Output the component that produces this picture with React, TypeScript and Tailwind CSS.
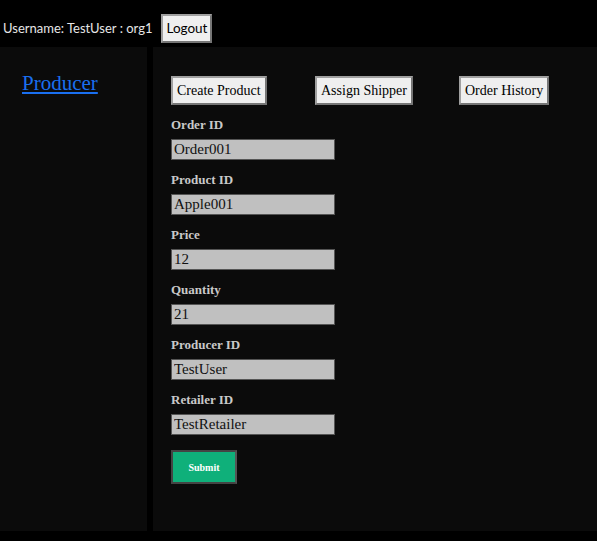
const fields = [
  { label: "Order ID", value: "Order001" },
  { label: "Product ID", value: "Apple001" },
  { label: "Price", value: "12" },
  { label: "Quantity", value: "21" },
  { label: "Producer ID", value: "TestUser" },
  { label: "Retailer ID", value: "TestRetailer" },
];

const tabs = ["Create Product", "Assign Shipper", "Order History"];

export default function App() {
  return (
    <div className="w-[597px] h-[541px] bg-black flex flex-col font-['Liberation_Serif',serif]">
      <header className="h-[47px] shrink-0 flex items-center gap-[9px] pl-[3px] pt-[10px] font-['Lato',sans-serif] text-[13px] text-[#e6e6e6]">
        <span>Username: TestUser : org1</span>
        <button className="h-[29px] px-[3px] bg-[#efefef] text-black text-[13.5px] border-2 border-[#767676] border-t-[#a0a0a0] border-l-[#a0a0a0]">
          Logout
        </button>
      </header>
      <div className="flex gap-[6px] h-[484px]">
        <aside className="w-[147px] shrink-0 bg-[#0b0b0b] pt-[21px] pl-[22px]">
          <a href="#" className="text-[21px] text-[#1a6ff0] underline">
            Producer
          </a>
        </aside>
        <main className="flex-1 bg-[#0b0b0b] pl-[18px] pt-[29px]">
          <div className="flex">
            {tabs.map((t) => (
              <div key={t} className="w-[144px]">
                <button className="h-[29px] px-[4px] bg-[#efefef] text-black text-[14px] border-2 border-[#767676] border-t-[#a0a0a0] border-l-[#a0a0a0]">
                  {t}
                </button>
              </div>
            ))}
          </div>
          <form className="flex flex-col mt-[7px]">
            {fields.map((f) => (
              <div key={f.label} className="flex flex-col h-[55px]">
                <label className="text-[13px] font-bold text-[#c9c9c9] h-[26px] leading-[26px]">
                  {f.label}
                </label>
                <input
                  readOnly
                  value={f.value}
                  className="w-[164px] h-[21px] mt-[1px] bg-[#c0c0c0] text-[#111] text-[15px] px-[2px] border border-[#555] outline-none"
                />
              </div>
            ))}
            <button
              type="button"
              className="mt-[8px] w-[66px] h-[34px] bg-[#0fb07a] text-white text-[10px] font-bold border-2 border-[#444] border-r-[#555]"
            >
              Submit
            </button>
          </form>
        </main>
      </div>
    </div>
  );
}
